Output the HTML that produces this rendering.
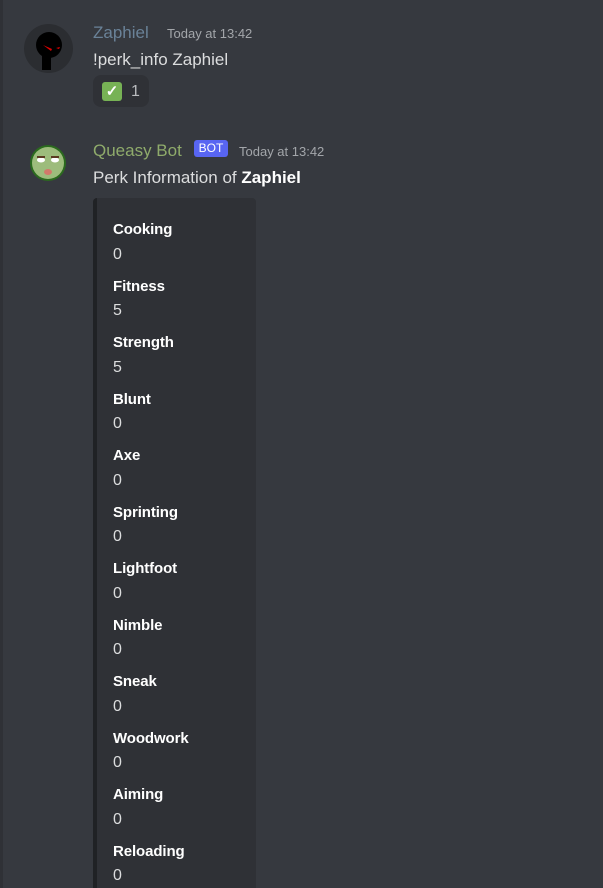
<!DOCTYPE html>
<html><head><meta charset="utf-8"><style>
html,body{margin:0;padding:0;width:603px;height:888px;overflow:hidden;background:#36393f;font-family:"Liberation Sans",sans-serif;position:relative}
.strip{position:absolute;left:0;top:0;width:3px;height:888px;background:#2f3136}
.a{position:absolute}
.name{font-size:17px}
.ts{font-size:13px;color:#a3a6aa}
.txt{font-size:17px;color:#dcddde}
.embed{position:absolute;left:93px;top:198px;width:163px;height:700px;background:#2f3136;border-left:4px solid #202225;border-radius:4px 4px 0 0;box-sizing:border-box}
.f{position:absolute;left:113px;font-size:15px;color:#fff;font-weight:bold;letter-spacing:-0.1px}
.v{position:absolute;left:113px;font-size:16px;color:#dcddde}
</style></head><body>
<div class="strip"></div>
<svg class="a" style="left:24px;top:24px" width="49" height="49" viewBox="0 0 49 49">
<circle cx="24.5" cy="24.5" r="24.5" fill="#2b2d31"/>
<circle cx="25" cy="21" r="13" fill="#000"/>
<rect x="18" y="30" width="9" height="16" fill="#000"/>
<path d="M19 21 L28 25 L27 27 Z" fill="#d00"/><path d="M32 24 L36 23 L35 25Z" fill="#d00"/>
</svg>
<div class="a name" style="left:93px;top:23px;color:#6a8298">Zaphiel</div>
<div class="a ts" style="left:167px;top:26px">Today at 13:42</div>
<div class="a txt" style="left:93px;top:50px">!perk_info Zaphiel</div>
<div class="a" style="left:93px;top:75px;width:56px;height:32px;background:#2f3136;border-radius:8px"></div>
<div class="a" style="left:102px;top:82px;width:20px;height:19px;background:#77b255;border-radius:3px;color:#fff;font-size:15px;text-align:center;line-height:19px;font-weight:bold">✓</div>
<div class="a" style="left:131px;top:83px;font-size:16px;color:#b9bbbe">1</div>
<svg class="a" style="left:29px;top:143px" width="38" height="40" viewBox="0 0 38 40">
<circle cx="19" cy="20" r="18" fill="#2b6a1e"/><circle cx="19" cy="20" r="16" fill="#9dbc7c"/>
<ellipse cx="12" cy="17" rx="4" ry="2.5" fill="#fff"/><ellipse cx="26" cy="17" rx="4" ry="2.5" fill="#fff"/>
<rect x="8" y="13" width="8" height="2" fill="#5a3a20"/><rect x="22" y="13" width="8" height="2" fill="#5a3a20"/>
<ellipse cx="19" cy="29" rx="4" ry="3" fill="#d2796a"/>
</svg>
<div class="a name" style="left:93px;top:141px;color:#8fab6b">Queasy Bot</div>
<div class="a" style="left:194px;top:140px;width:34px;height:17px;background:#5865f2;border-radius:3px;color:#fff;font-size:12px;line-height:17px;text-align:center">BOT</div>
<div class="a ts" style="left:239px;top:144px">Today at 13:42</div>
<div class="a txt" style="left:93px;top:168px">Perk Information of <b style="color:#fff">Zaphiel</b></div>
<div class="embed"></div>
<div class="f" style="top:221px">Cooking</div><div class="v" style="top:246px">0</div>
<div class="f" style="top:278px">Fitness</div><div class="v" style="top:302px">5</div>
<div class="f" style="top:334px">Strength</div><div class="v" style="top:359px">5</div>
<div class="f" style="top:391px">Blunt</div><div class="v" style="top:415px">0</div>
<div class="f" style="top:447px">Axe</div><div class="v" style="top:472px">0</div>
<div class="f" style="top:504px">Sprinting</div><div class="v" style="top:528px">0</div>
<div class="f" style="top:560px">Lightfoot</div><div class="v" style="top:585px">0</div>
<div class="f" style="top:617px">Nimble</div><div class="v" style="top:641px">0</div>
<div class="f" style="top:673px">Sneak</div><div class="v" style="top:698px">0</div>
<div class="f" style="top:730px">Woodwork</div><div class="v" style="top:754px">0</div>
<div class="f" style="top:786px">Aiming</div><div class="v" style="top:811px">0</div>
<div class="f" style="top:843px">Reloading</div><div class="v" style="top:867px">0</div>
</body></html>
